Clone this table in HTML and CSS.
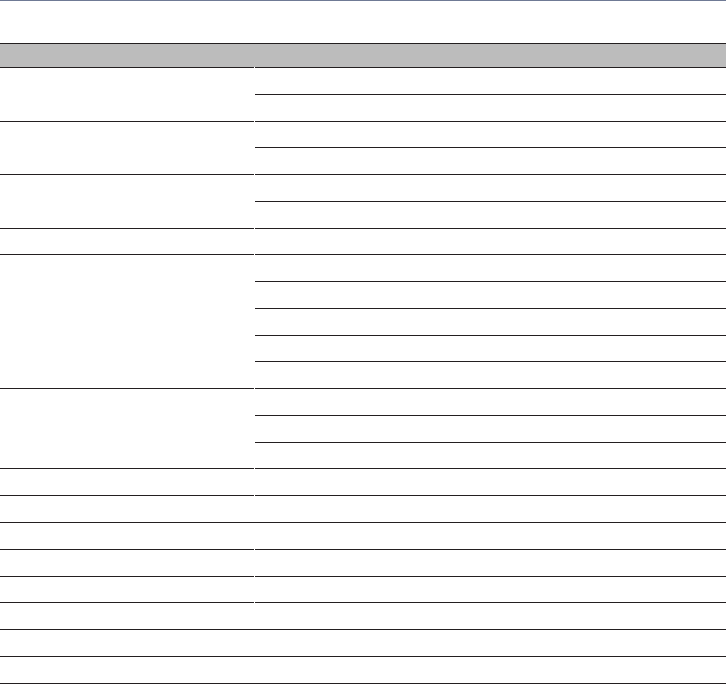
FILE: index.html
```html
<!DOCTYPE html>
<html lang="en">
<head>
<meta charset="utf-8">
<title>Table</title>
<link rel="stylesheet" href="styles.css">
</head>
<body>
<div class="rule"></div>
<div class="table">
  <div class="cell head left"></div>
  <div class="cell head right"></div>

  <div class="cell left span2"></div>
  <div class="cell right"></div>
  <div class="cell right"></div>

  <div class="cell left span2"></div>
  <div class="cell right"></div>
  <div class="cell right"></div>

  <div class="cell left span2"></div>
  <div class="cell right"></div>
  <div class="cell right"></div>

  <div class="cell left"></div>
  <div class="cell right"></div>

  <div class="cell left span5"></div>
  <div class="cell right"></div>
  <div class="cell right"></div>
  <div class="cell right"></div>
  <div class="cell right"></div>
  <div class="cell right"></div>

  <div class="cell left span3"></div>
  <div class="cell right"></div>
  <div class="cell right"></div>
  <div class="cell right"></div>

  <div class="cell left"></div>
  <div class="cell right"></div>
  <div class="cell left nogap"></div>
  <div class="cell right"></div>
  <div class="cell left"></div>
  <div class="cell right"></div>
  <div class="cell left"></div>
  <div class="cell right"></div>
  <div class="cell left"></div>
  <div class="cell right"></div>
  <div class="cell left nogap"></div>
  <div class="cell right"></div>
  <div class="cell left nogap"></div>
  <div class="cell right"></div>
  <div class="cell left nogap"></div>
  <div class="cell right"></div>
</div>
</body>
</html>
```

FILE: styles.css
```css
html, body {
  margin: 0;
  padding: 0;
  background: #ffffff;
  font-family: "Liberation Sans", Arial, sans-serif;
}

.rule {
  height: 1px;
  background: #6f7a95;
  margin-bottom: 42px;
}

.table {
  display: grid;
  grid-template-columns: 255px 1fr;
  grid-template-rows: 24px;
  grid-auto-rows: 26.78px;
  border-top: 1px solid #231f20;
}

.left {
  grid-column: 1;
  background: linear-gradient(#231f20, #231f20) left bottom / calc(100% - 1px) 1px no-repeat;
}

.left.nogap {
  background: linear-gradient(#231f20, #231f20) left bottom / 100% 1px no-repeat;
}

.right {
  grid-column: 2;
  background: linear-gradient(#231f20, #231f20) left bottom / 100% 1px no-repeat;
}

.head.left {
  background:
    linear-gradient(#231f20, #231f20) left bottom / calc(100% - 1px) 1px no-repeat,
    linear-gradient(#ffffff, #ffffff) right bottom / 1px 1px no-repeat,
    #bcbcbc;
}

.head.right {
  background:
    linear-gradient(#231f20, #231f20) left bottom / 100% 1px no-repeat,
    #bcbcbc;
}

.span2 { grid-row: span 2; }
.span3 { grid-row: span 3; }
.span5 { grid-row: span 5; }
```
